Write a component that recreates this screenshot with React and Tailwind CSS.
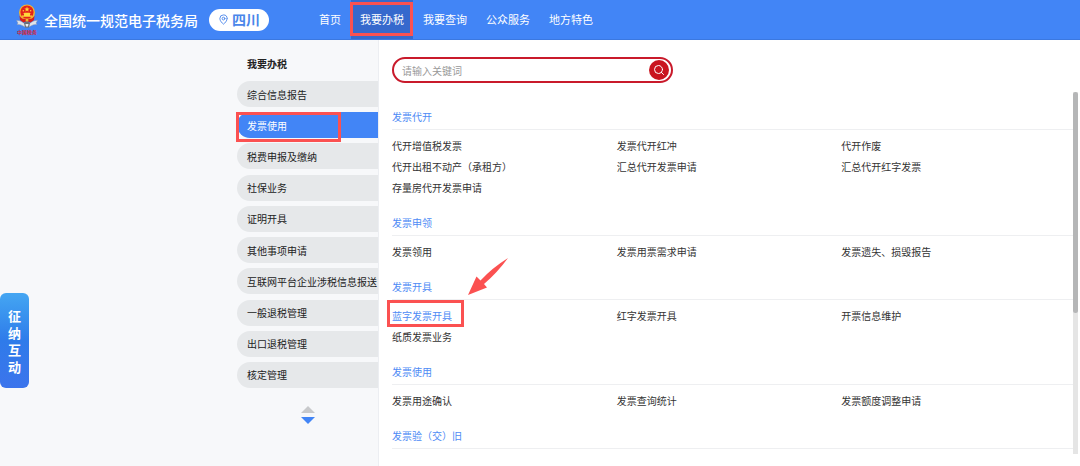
import { MapPin, Search } from 'lucide-react';

const NAV = ['首页', '我要办税', '我要查询', '公众服务', '地方特色'];

const MENU = [
  '综合信息报告',
  '发票使用',
  '税费申报及缴纳',
  '社保业务',
  '证明开具',
  '其他事项申请',
  '互联网平台企业涉税信息报送',
  '一般退税管理',
  '出口退税管理',
  '核定管理',
];

const SECTIONS = [
  {
    title: '发票代开',
    items: [
      '代开增值税发票',
      '发票代开红冲',
      '代开作废',
      '代开出租不动产（承租方）',
      '汇总代开发票申请',
      '汇总代开红字发票',
      '存量房代开发票申请',
    ],
  },
  { title: '发票申领', items: ['发票领用', '发票用票需求申请', '发票遗失、损毁报告'] },
  { title: '发票开具', items: ['蓝字发票开具', '红字发票开具', '开票信息维护', '纸质发票业务'] },
  { title: '发票使用', items: ['发票用途确认', '发票查询统计', '发票额度调整申请'] },
  { title: '发票验（交）旧', items: [] },
];

const ACTIVE_NAV = '我要办税';
const ACTIVE_MENU = '发票使用';
const ACTIVE_ITEM = '蓝字发票开具';

const markClass = 'pointer-events-none absolute z-10 border-[#fb5151]';

function Emblem() {
  return (
    <svg viewBox="0 0 22 32" className="h-8 w-[22px] shrink-0" role="img" aria-label="中国税务">
      <path d="M0.5 16.5 C4 16 6 18 8.500 19.500 L13.500 19.500 C16 18 18 16 21.500 16.500 L20 19 L21 20.500 C17 20 15 22 13 23 L9 23 C7 22 5 20 1 20.500 L2 19 Z" fill="#dfe3ea" stroke="#8b93a3" strokeWidth="0.4" />
      <path d="M8 19 L11 17 L14 19 L13 23.500 L9 23.500 Z" fill="#6b6f78" />
      <path d="M9.500 20 L12.500 20 L12 22.500 L10 22.500 Z" fill="#eef0f3" />
      <circle cx="11" cy="8.500" r="8" fill="#f4b62c" />
      <circle cx="11" cy="8" r="6.600" fill="#e3211c" />
      <path d="M11 2.600 L11.700 4.400 L13.600 4.500 L12.100 5.700 L12.600 7.500 L11 6.500 L9.400 7.500 L9.900 5.700 L8.400 4.500 L10.300 4.400 Z" fill="#ffd83b" />
      <circle cx="7.300" cy="6.800" r="0.700" fill="#ffd83b" />
      <circle cx="14.700" cy="6.800" r="0.700" fill="#ffd83b" />
      <path d="M7 10 L8.500 8.800 L13.500 8.800 L15 10 L14 10 L14 11.500 L16 11.500 L16 12.800 L6 12.800 L6 11.500 L8 11.500 L8 10 Z" fill="#ffd83b" />
      <path d="M3.500 11.500 C5 15 8 15.500 11 14.200 C14 15.500 17 15 18.500 11.500 L18 16 L14.500 18.500 L11 17 L7.500 18.500 L4 16 Z" fill="#d81e1a" />
      <circle cx="11" cy="16" r="1.500" fill="#f4b62c" />
      <text x="11" y="29.500" textAnchor="middle" fontSize="5" fontWeight="700" fill="#cf2438">
        中国税务
      </text>
    </svg>
  );
}

function Header() {
  return (
    <header className="flex h-10 shrink-0 items-center border-b border-[#3b78e0] bg-[#4285f6] pl-4 text-white">
      <Emblem />
      <h1 className="ml-1.5 shrink-0 text-[14px] font-medium leading-5">全国统一规范电子税务局</h1>
      <button
        type="button"
        className="ml-[11px] flex h-[22px] w-[60px] shrink-0 items-center justify-center gap-[3px] rounded-full bg-white text-[14px] font-bold text-[#4a86ea]"
      >
        <MapPin className="h-[11px] w-[11px]" strokeWidth={2} />
        四川
      </button>
      <nav className="ml-[41px] flex shrink-0 gap-px self-stretch text-[11px]">
        {NAV.map((name) => (
          <a
            key={name}
            href="#"
            className={`relative flex items-center px-[9px] ${name === ACTIVE_NAV ? 'bg-[#3669cd]' : ''}`}
          >
            {name}
            {name === ACTIVE_NAV && <span className={`${markClass} -left-px right-0 top-0.5 h-[34px] border-[3px]`} />}
          </a>
        ))}
      </nav>
    </header>
  );
}

function Sidebar() {
  return (
    <aside className="w-[379px] shrink-0 border-r border-[#eceef2] bg-[#f7f8fa] pl-[237px] pt-4">
      <h2 className="pl-2.5 text-[10px] font-bold leading-4 text-[#222]">我要办税</h2>
      <ul className="mt-[9px] flex h-[307px] flex-col justify-between">
        {MENU.map((name) => (
          <li key={name} className="relative">
            <a
              href="#"
              className={`flex h-[26px] items-center whitespace-nowrap rounded-l-full pl-2.5 ${
                name === ACTIVE_MENU ? 'bg-[#4285f6] text-white' : 'bg-[#e6e8ea] text-[#222]'
              }`}
            >
              {name}
            </a>
            {name === ACTIVE_MENU && <span className={`${markClass} -left-px top-0 h-[30px] w-[105px] border-[3px]`} />}
          </li>
        ))}
      </ul>
      <div className="mt-[18px] flex flex-col items-center gap-1">
        <button type="button" aria-label="向上">
          <svg viewBox="0 0 14 7" className="block h-[7px] w-3.5">
            <path d="M0 7 L7 0 L14 7 Z" fill="#c8c9cb" />
          </svg>
        </button>
        <button type="button" aria-label="向下">
          <svg viewBox="0 0 14 7" className="block h-[7px] w-3.5">
            <path d="M0 0 L14 0 L7 7 Z" fill="#4285f6" />
          </svg>
        </button>
      </div>
    </aside>
  );
}

function Section({ title, items }) {
  return (
    <section>
      <h3 className="border-b border-[#eeeff1] leading-6 text-[#4e8bf5]">{title}</h3>
      <ul className="grid grid-cols-3 pb-[13px] pr-[7px] pt-[5px]">
        {items.map((item) => (
          <li key={item} className="leading-[21px]">
            <a href="#" className={`relative ${item === ACTIVE_ITEM ? 'text-[#4e8bf5]' : 'text-[#333]'}`}>
              {item}
              {item === ACTIVE_ITEM && (
                <>
                  <span className={`${markClass} -left-[5px] -right-3 -top-2 h-[27px] border-[3px]`} />
                  <svg
                    viewBox="0 0 40 37"
                    className="pointer-events-none absolute bottom-7 left-[76px] h-[37px] w-10"
                    aria-hidden="true"
                  >
                    <path d="M0 37 L8.500 18.500 L12.500 22.500 Q24 10 40 0 Q29 15 16 26 L19 29.500 Z" fill="#fb5151" />
                  </svg>
                </>
              )}
            </a>
          </li>
        ))}
      </ul>
    </section>
  );
}

function App() {
  return (
    <div className="relative flex h-screen flex-col overflow-hidden bg-white font-['Noto_Sans_CJK_SC',sans-serif] text-[10px]">
      <Header />
      <div className="flex min-h-0 flex-1">
        <Sidebar />
        <main className="flex min-w-0 flex-1 flex-col pb-3 pr-0.5 pt-[17px]">
          <form className="ml-[13px] flex h-[26px] w-[281px] shrink-0 items-center rounded-full border-2 border-[#c91a2b] pl-2 pr-0.5">
            <input
              type="text"
              aria-label="请输入关键词"
              placeholder="请输入关键词"
              className="min-w-0 flex-1 bg-transparent outline-none placeholder:text-[#999]"
            />
            <button
              type="button"
              aria-label="搜索"
              className="flex h-5 w-5 items-center justify-center rounded-full bg-[#c9151f] text-white"
            >
              <Search className="h-3 w-3" strokeWidth={2} />
            </button>
          </form>
          <div className="mt-[9px] flex min-h-0 flex-1">
            <div className="min-w-0 flex-1 overflow-hidden pl-[13px] pt-[13px]">
              {SECTIONS.map((section) => (
                <Section key={section.title} title={section.title} items={section.items} />
              ))}
            </div>
            <div className="w-[5px] shrink-0 bg-[#e5e5e5]">
              <div className="h-[61%] rounded-full bg-[#b5b6b7]" />
            </div>
          </div>
        </main>
      </div>
      <button
        type="button"
        className="absolute left-0 top-[293px] flex h-[95px] w-[29px] flex-col items-center justify-center rounded-md bg-linear-to-b from-[#45a6f2] via-[#2f7bea] to-[#3b74ec] text-[13px] font-bold leading-[17px] text-white"
      >
        <span>征</span>
        <span>纳</span>
        <span>互</span>
        <span>动</span>
      </button>
    </div>
  );
}

export default App;
